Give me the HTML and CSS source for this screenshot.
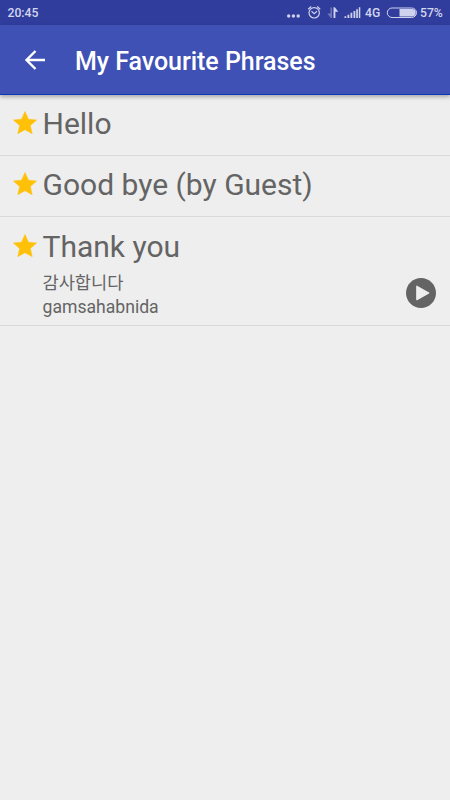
FILE: index.html
```html
<!DOCTYPE html>
<html lang="en">
<head>
<meta charset="utf-8">
<title>My Favourite Phrases</title>
<link rel="stylesheet" href="styles.css">
</head>
<body>
<div class="status">
  <span class="clock">20:45</span>
  <svg class="status-icons" viewBox="284 0 166 25" width="166" height="25">
    <g fill="#cfd2ed">
      <circle cx="288.700" cy="16" r="1.700"/><circle cx="293.400" cy="16" r="1.700"/><circle cx="298.200" cy="16" r="1.700"/>
      <path d="M332 7.500V18H330.800L327.300 13.500H330.500V7.500Z" opacity=".4"/>
      <path d="M333.500 7.200H334.800L338.300 11.800H335.400V18H333.500Z"/>
      <path d="M344.500 16.200h1.800V18h-1.800zM347.500 14.700h1.800V18h-1.800zM350.500 12.800h1.800V18h-1.800zM353.500 11h1.800v7h-1.800zM356.200 9.200h1.700V18h-1.700zM358.800 7.300h1.500V18h-1.500z"/>
      <path d="M399.500 9H412a3.700 3.700 0 0 1 0 7.500H399.500Z"/>
    </g>
    <g fill="none" stroke="#cfd2ed" stroke-width="1.200">
      <circle cx="314.200" cy="12.800" r="5.200"/>
      <path d="M311.500 11.300L314.200 13.700L317 11.300M308.200 9.200L311.200 6.500M320.200 9.200L317.200 6.500"/>
      <rect x="387.300" y="8" width="29.200" height="9.500" rx="4.750" stroke-width="1"/>
    </g>
  </svg>
  <span class="network">4G</span>
  <span class="battery">57%</span>
</div>
<header class="appbar">
  <svg class="back" viewBox="0 0 22 20" width="22" height="20"><path d="M21 10H2.500M11.500 1L2.500 10L11.500 19" fill="none" stroke="#fff" stroke-width="2.400"/></svg>
  <h1>My Favourite Phrases</h1>
</header>
<main>
  <section class="row">
    <svg class="star" viewBox="2 2 20 19" width="24" height="23"><path d="M12 17.500L18 20.800L16.500 14.100L21.700 9.400L14.900 8.700L12 2.300L9.100 8.700L2.300 9.400L7.500 14.100L6 20.800Z"/></svg>
    <div class="phrase">Hello</div>
  </section>
  <section class="row">
    <svg class="star" viewBox="2 2 20 19" width="24" height="23"><path d="M12 17.500L18 20.800L16.500 14.100L21.700 9.400L14.900 8.700L12 2.300L9.100 8.700L2.300 9.400L7.500 14.100L6 20.800Z"/></svg>
    <div class="phrase">Good bye (by Guest)</div>
  </section>
  <section class="row open">
    <svg class="star" viewBox="2 2 20 19" width="24" height="23"><path d="M12 17.500L18 20.800L16.500 14.100L21.700 9.400L14.900 8.700L12 2.300L9.100 8.700L2.300 9.400L7.500 14.100L6 20.800Z"/></svg>
    <div class="text">
      <div class="phrase">Thank you</div>
      <div class="detail korean">감사합니다</div>
      <div class="detail">gamsahabnida</div>
    </div>
    <svg class="play" viewBox="2 2 20 20" width="30" height="30"><path d="M12 2C6.480 2 2 6.480 2 12s4.480 10 10 10 10-4.480 10-10S17.520 2 12 2z" fill="#646464"/><path d="M9.200 7.500v9l8-4.500z" fill="#eee" stroke="#eee" stroke-width=".8" stroke-linejoin="round"/></svg>
  </section>
</main>
</body>
</html>
```
FILE: styles.css
```css
* { box-sizing: border-box; }
body {
  margin: 0;
  min-height: 800px;
  background: #eee;
  font-family: Roboto, "Noto Sans CJK KR", sans-serif;
}
.status {
  position: relative;
  height: 25px;
  background: #303d9d;
  color: #d3d6ef;
  font-size: 12.2px;
  font-weight: 500;
  line-height: 26px;
  display: flex;
  justify-content: space-between;
  padding-left: 7.5px;
}
.network, .battery { position: absolute; top: 0; }
.network { left: 365px; }
.battery { left: 420px; }
.appbar {
  position: relative;
  height: 70px;
  display: flex;
  align-items: center;
  padding-left: 24px;
  background: #3f51b5;
  border-bottom: 1px solid #0b36b5;
  box-shadow: 0 2px 4px rgba(0, 0, 0, .3);
}
.back { flex: none; }
.appbar h1 {
  margin: 4px 0 0 29px;
  color: #fff;
  font-size: 25px;
  font-weight: 500;
  letter-spacing: -.04px;
  line-height: 30px;
  white-space: nowrap;
}
.row {
  height: 61px;
  display: flex;
  align-items: flex-start;
  padding: 11px 14px 0 13px;
  border-bottom: 1px solid #d9d9d9;
}
.row.open { height: 109px; padding-top: 12px; }
.star { flex: none; margin: 4.5px 5.5px 0 0; fill: #ffc107; stroke: #ffc107; stroke-width: .4; stroke-linejoin: round; }
.phrase {
  color: #646464;
  font-size: 30px;
  line-height: 36px;
  white-space: nowrap;
}
.text { flex: 1; }
.detail {
  color: #646464;
  font-size: 17.6px;
  line-height: 24px;
}
.korean { margin-top: 6px; }
.play { flex: none; margin-top: 49px; }
```
